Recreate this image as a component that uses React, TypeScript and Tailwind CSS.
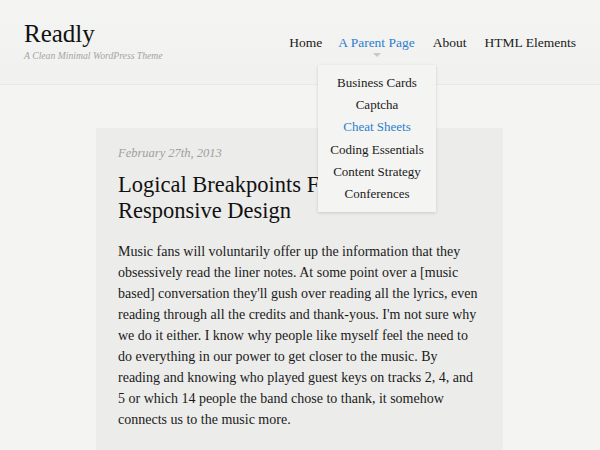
import React from "react";

const serif = { fontFamily: '"Liberation Serif", "DejaVu Serif", serif' };

const lines = [
  "Music fans will voluntarily offer up the information that they",
  "obsessively read the liner notes. At some point over a [music",
  "based] conversation they'll gush over reading all the lyrics, even",
  "reading through all the credits and thank-yous. I'm not sure why",
  "we do it either. I know why people like myself feel the need to",
  "do everything in our power to get closer to the music. By",
  "reading and knowing who played guest keys on tracks 2, 4, and",
  "5 or which 14 people the band chose to thank, it somehow",
  "connects us to the music more.",
];

export default function App() {
  const sub = ["Business Cards", "Captcha", "Cheat Sheets", "Coding Essentials", "Content Strategy", "Conferences"];
  return (
    <div className="w-[600px] h-[450px] overflow-hidden bg-[#f4f4f2] text-[#1a1a1a]" style={serif}>
      <header className="relative h-[85px] border-b border-[#e8e8e6] bg-gradient-to-b from-[#f4f4f2] to-[#f1f1ef] flex items-start justify-between pl-[24px] pr-[24px]">
        <div className="pt-[19px]">
          <div className="text-[25px] leading-[30px] text-[#111]">Readly</div>
          <div className="text-[9.7px] italic text-[#a5a5a3] mt-[0px]">A Clean Minimal WordPress Theme</div>
        </div>
        <nav className="flex gap-[18px] pt-[34px] text-[13.5px] leading-[18px]">
          <span className="mr-[-2px]">Home</span>
          <span className="relative text-[#2c7fcf]">
            A Parent Page
            <span className="absolute left-1/2 -translate-x-1/2 top-[19px] w-0 h-0 border-l-[4px] border-r-[4px] border-t-[4px] border-l-transparent border-r-transparent border-t-[#c8c8c6]" />
          </span>
          <span>About</span>
          <span className="flex gap-[3px]"><span>HTML</span><span>Elements</span></span>
        </nav>
        <div className="absolute left-[318px] top-[65px] w-[118px] h-[147px] bg-[#f4f4f2] shadow-[0_1px_3px_rgba(0,0,0,0.15)] z-10 flex flex-col items-center pt-[7px] text-[13px] leading-[22.2px]">
          {sub.map((s) => (
            <span key={s} className={s === "Cheat Sheets" ? "text-[#2c7fcf]" : "text-[#1a1a1a]"}>{s}</span>
          ))}
        </div>
      </header>
      <main className="pt-[43px] pl-[96px]">
        <article className="w-[407px] h-[330px] bg-[#ececea] px-[22px] pt-[16px]">
          <div className="text-[12.5px] italic text-[#9f9f9d]">February 27th, 2013</div>
          <h1 className="text-[22.5px] leading-[26px] mt-[9px] text-[#111]">
            Logical Breakpoints For
            <br />
            Responsive Design
          </h1>
          <p className="text-[14px] leading-[21px] mt-[17px] text-[#1a1a1a] whitespace-nowrap">
            {lines.map((l, i) => (
              <React.Fragment key={i}>
                {l}
                {i < lines.length - 1 && <br />}
              </React.Fragment>
            ))}
          </p>
        </article>
      </main>
    </div>
  );
}
